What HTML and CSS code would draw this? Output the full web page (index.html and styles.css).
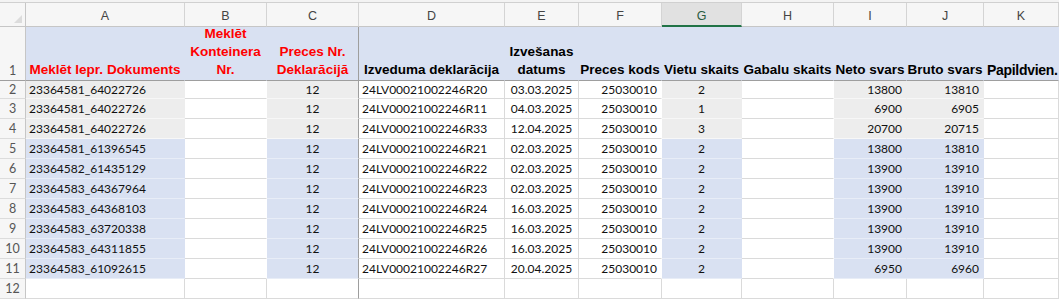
FILE: index.html
```html
<!DOCTYPE html>
<html lang="lv">
<head>
<meta charset="utf-8">
<title>Sheet</title>
<link rel="stylesheet" href="styles.css">
</head>
<body>
<div class="topbar"></div>
<div class="sheet">
  <div class="row hdr">
    <div class="cell corner"><span class="tri"></span></div>
    <div class="cell ch">A</div>
    <div class="cell ch">B</div>
    <div class="cell ch">C</div>
    <div class="cell ch">D</div>
    <div class="cell ch">E</div>
    <div class="cell ch">F</div>
    <div class="cell ch sel">G</div>
    <div class="cell ch">H</div>
    <div class="cell ch">I</div>
    <div class="cell ch">J</div>
    <div class="cell ch">K</div>
  </div>
  <div class="row r1">
    <div class="cell rn">1</div>
    <div class="cell th red">Meklēt Iepr. Dokuments</div>
    <div class="cell th red">Meklēt<br>Konteinera<br>Nr.</div>
    <div class="cell th red fz">Preces Nr.<br>Deklarācijā</div>
    <div class="cell th">Izveduma deklarācija</div>
    <div class="cell th">Izvešanas<br>datums</div>
    <div class="cell th">Preces kods</div>
    <div class="cell th">Vietu skaits</div>
    <div class="cell th">Gabalu skaits</div>
    <div class="cell th">Neto svars</div>
    <div class="cell th">Bruto svars</div>
    <div class="cell th big">Papildvien.</div>
  </div>

  <div class="row r2">
    <div class="cell rn">2</div>
    <div class="cell g">23364581_64022726</div>
    <div class="cell nx"></div>
    <div class="cell g ac fz">12</div>
    <div class="cell">24LV00021002246R20</div>
    <div class="cell ac">03.03.2025</div>
    <div class="cell ar nx">25030010</div>
    <div class="cell g ac">2</div>
    <div class="cell nx"></div>
    <div class="cell g ar">13800</div>
    <div class="cell g ar">13810</div>
    <div class="cell"></div>
  </div>
  <div class="row">
    <div class="cell rn">3</div>
    <div class="cell g">23364581_64022726</div>
    <div class="cell nx"></div>
    <div class="cell g ac fz">12</div>
    <div class="cell">24LV00021002246R11</div>
    <div class="cell ac">04.03.2025</div>
    <div class="cell ar nx">25030010</div>
    <div class="cell g ac">1</div>
    <div class="cell nx"></div>
    <div class="cell g ar">6900</div>
    <div class="cell g ar">6905</div>
    <div class="cell"></div>
  </div>
  <div class="row">
    <div class="cell rn">4</div>
    <div class="cell g">23364581_64022726</div>
    <div class="cell nx"></div>
    <div class="cell g ac fz">12</div>
    <div class="cell">24LV00021002246R33</div>
    <div class="cell ac">12.04.2025</div>
    <div class="cell ar nx">25030010</div>
    <div class="cell g ac">3</div>
    <div class="cell nx"></div>
    <div class="cell g ar">20700</div>
    <div class="cell g ar">20715</div>
    <div class="cell"></div>
  </div>
  <div class="row">
    <div class="cell rn">5</div>
    <div class="cell b">23364581_61396545</div>
    <div class="cell nx"></div>
    <div class="cell b ac fz">12</div>
    <div class="cell">24LV00021002246R21</div>
    <div class="cell ac">02.03.2025</div>
    <div class="cell ar nx">25030010</div>
    <div class="cell b ac">2</div>
    <div class="cell nx"></div>
    <div class="cell b ar">13800</div>
    <div class="cell b ar">13810</div>
    <div class="cell"></div>
  </div>
  <div class="row">
    <div class="cell rn">6</div>
    <div class="cell b">23364582_61435129</div>
    <div class="cell nx"></div>
    <div class="cell b ac fz">12</div>
    <div class="cell">24LV00021002246R22</div>
    <div class="cell ac">02.03.2025</div>
    <div class="cell ar nx">25030010</div>
    <div class="cell b ac">2</div>
    <div class="cell nx"></div>
    <div class="cell b ar">13900</div>
    <div class="cell b ar">13910</div>
    <div class="cell"></div>
  </div>
  <div class="row">
    <div class="cell rn">7</div>
    <div class="cell b">23364583_64367964</div>
    <div class="cell nx"></div>
    <div class="cell b ac fz">12</div>
    <div class="cell">24LV00021002246R23</div>
    <div class="cell ac">02.03.2025</div>
    <div class="cell ar nx">25030010</div>
    <div class="cell b ac">2</div>
    <div class="cell nx"></div>
    <div class="cell b ar">13900</div>
    <div class="cell b ar">13910</div>
    <div class="cell"></div>
  </div>
  <div class="row">
    <div class="cell rn">8</div>
    <div class="cell b">23364583_64368103</div>
    <div class="cell nx"></div>
    <div class="cell b ac fz">12</div>
    <div class="cell">24LV00021002246R24</div>
    <div class="cell ac">16.03.2025</div>
    <div class="cell ar nx">25030010</div>
    <div class="cell b ac">2</div>
    <div class="cell nx"></div>
    <div class="cell b ar">13900</div>
    <div class="cell b ar">13910</div>
    <div class="cell"></div>
  </div>
  <div class="row">
    <div class="cell rn">9</div>
    <div class="cell b">23364583_63720338</div>
    <div class="cell nx"></div>
    <div class="cell b ac fz">12</div>
    <div class="cell">24LV00021002246R25</div>
    <div class="cell ac">16.03.2025</div>
    <div class="cell ar nx">25030010</div>
    <div class="cell b ac">2</div>
    <div class="cell nx"></div>
    <div class="cell b ar">13900</div>
    <div class="cell b ar">13910</div>
    <div class="cell"></div>
  </div>
  <div class="row">
    <div class="cell rn">10</div>
    <div class="cell b">23364583_64311855</div>
    <div class="cell nx"></div>
    <div class="cell b ac fz">12</div>
    <div class="cell">24LV00021002246R26</div>
    <div class="cell ac">16.03.2025</div>
    <div class="cell ar nx">25030010</div>
    <div class="cell b ac">2</div>
    <div class="cell nx"></div>
    <div class="cell b ar">13900</div>
    <div class="cell b ar">13910</div>
    <div class="cell"></div>
  </div>
  <div class="row">
    <div class="cell rn">11</div>
    <div class="cell b">23364583_61092615</div>
    <div class="cell nx"></div>
    <div class="cell b ac fz">12</div>
    <div class="cell">24LV00021002246R27</div>
    <div class="cell ac">20.04.2025</div>
    <div class="cell ar nx">25030010</div>
    <div class="cell b ac">2</div>
    <div class="cell nx"></div>
    <div class="cell b ar">6950</div>
    <div class="cell b ar">6960</div>
    <div class="cell"></div>
  </div>
  <div class="row">
    <div class="cell rn">12</div>
    <div class="cell"></div>
    <div class="cell"></div>
    <div class="cell fz"></div>
    <div class="cell"></div>
    <div class="cell"></div>
    <div class="cell"></div>
    <div class="cell"></div>
    <div class="cell"></div>
    <div class="cell"></div>
    <div class="cell"></div>
    <div class="cell"></div>
  </div>
</div>
</body>
</html>
```

FILE: styles.css
```css
html, body {
  margin: 0;
  padding: 0;
  background: #ffffff;
}
body {
  width: 1059px;
  height: 299px;
  overflow: hidden;
  font-family: Lato, "Liberation Sans", sans-serif;
  color: #000;
}
.topbar {
  height: 3px;
  box-sizing: border-box;
  background: #f3f3f3;
  border-bottom: 1px solid #d0d0d0;
}
.sheet {
  display: flex;
  flex-direction: column;
}
.row {
  display: grid;
  grid-template-columns: 26px 159px 82px 92px 146px 74px 83px 80px 92px 73px 77px 1fr;
  height: 20px;
}
.row.hdr { height: 24px; }
.row.r1 { height: 54px; }
.row.r2 { height: 18px; }

.cell {
  box-sizing: border-box;
  border-right: 1px solid #dadada;
  border-bottom: 1px solid #dadada;
  display: flex;
  align-items: center;
  justify-content: flex-start;
  padding: 0 3px;
  white-space: nowrap;
  overflow: hidden;
  font-size: 12px;
  line-height: 14px;
  background: #ffffff;
  color: #111;
}
.ac { justify-content: center; }
.ar { justify-content: flex-end; padding-right: 4px; }

.corner {
  background: #f6f6f6;
  border-right-color: #c6c6c6;
  border-bottom-color: #c6c6c6;
  position: relative;
}
.tri {
  position: absolute;
  right: 3px;
  bottom: 3px;
  width: 0;
  height: 0;
  border-left: 8px solid transparent;
  border-bottom: 8px solid #dcdcdc;
}
.ch {
  background: #f6f6f6;
  border-right-color: #d4d4d4;
  border-bottom-color: #c6c6c6;
  justify-content: center;
  align-items: flex-end;
  padding-bottom: 3px;
  font-family: "Liberation Sans", sans-serif;
  font-size: 12.5px;
  color: #444;
}
.ch.sel {
  background: #e1e1e1;
  border-bottom: 2px solid #217346;
  padding-bottom: 2px;
  color: #2a5c3f;
}
.rn {
  background: #f6f6f6;
  border-right-color: #c6c6c6;
  border-bottom-color: #dcdcdc;
  justify-content: center;
  padding: 0;
  font-size: 12.5px;
  color: #555;
}

.r1 .cell {
  border-bottom-color: #9e9e9e;
  align-items: flex-end;
}
.th {
  background: #d9e1f2;
  border-right-color: #d9e1f2;
  justify-content: center;
  text-align: center;
  font-family: "Liberation Sans", Arial, sans-serif;
  font-weight: bold;
  font-size: 13.5px;
  line-height: 18px;
  padding: 0 1px 1px;
  color: #000;
}
.r1 .rn {
  padding-bottom: 2px;
}
.th.red { color: #ff0000; }
.th.big {
  justify-content: flex-start;
  font-size: 14px;
  letter-spacing: -0.3px;
  padding-left: 3px;
  padding-right: 0;
  padding-bottom: 1px;
}

.g {
  background: #ededed;
  border-right-color: #ededed;
  border-bottom-color: #f7f7f7;
}
.b {
  background: #d9e1f2;
  border-right-color: #d9e1f2;
  border-bottom-color: #e8edf7;
}
.nx { border-right-color: #ffffff; }
.cell.fz { border-right-color: #9e9e9e; }
```
